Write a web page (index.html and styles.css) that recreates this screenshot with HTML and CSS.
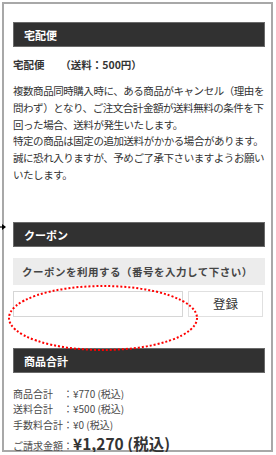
FILE: index.html
```html
<!DOCTYPE html>
<html lang="ja">
<head>
  <meta charset="UTF-8" />
  <meta name="viewport" content="width=device-width, initial-scale=1.0"/>
  <title>お届け方法・クーポン</title>
  <link rel="stylesheet" href="styles.css">
</head>
<body>

<svg class="pointer" width="6" height="8" viewBox="0 0 6 8">
  <path d="M0 4 H3" stroke="#000" stroke-width="1.2"/>
  <path d="M2 1 L6 4 L2 7 Z" fill="#000"/>
</svg>

<div class="frame">

  <h3 class="bar first">宅配便</h3>
  <p class="method">宅配便　　（送料：500円）</p>
  <p class="note">
    複数商品同時購入時に、ある商品がキャンセル（理由を問わず）となり、ご注文合計金額が送料無料の条件を下回った場合、送料が発生いたします。<br>
    特定の商品は固定の追加送料がかかる場合があります。誠に恐れ入りますが、予めご了承下さいますようお願いいたします。
  </p>

  <h3 class="bar coupon-bar">クーポン</h3>
  <div class="coupon-title">クーポンを利用する（番号を入力して下さい）</div>
  <form class="coupon-row">
    <input type="text" name="coupon" class="coupon-input" />
    <button type="button" class="coupon-btn">登録</button>
    <svg class="circle" width="194" height="70" viewBox="0 0 194 70">
      <ellipse cx="97" cy="34" rx="94" ry="32" fill="none" stroke="#f00" stroke-width="2" stroke-dasharray="2 2"/>
    </svg>
  </form>

  <h3 class="bar total-bar">商品合計</h3>
  <ul class="totals">
    <li><span class="lbl">商品合計</span>：¥770 (税込)</li>
    <li><span class="lbl">送料合計</span>：¥500 (税込)</li>
    <li><span class="lbl">手数料合計</span>：¥0 (税込)</li>
    <li class="grand"><span class="lbl">ご請求金額</span>：<b>¥1,270 (税込)</b></li>
  </ul>

</div>

</body>
</html>
```

FILE: styles.css
```css
body {
  margin: 0;
  font-family: "Noto Sans CJK JP", "Noto Sans", sans-serif;
  color: #333;
  background: #fff;
}

.pointer {
  position: absolute;
  left: 0;
  top: 223px;
}

.frame {
  margin: 2px 3px 0 2px;
  height: 450px;
  border: 2px solid #a8a8a8;
  padding: 18px 6px 0 9px;
  box-sizing: border-box;
}

.bar {
  margin: 0;
  height: 25px;
  line-height: 24px;
  padding-left: 10px;
  background: #313131;
  border: 1px solid #6a6a6a;
  box-sizing: border-box;
  color: #fff;
  font-size: 11px;
  font-weight: bold;
}

.method {
  margin: 10px 0 0;
  font-size: 10.5px;
  font-weight: bold;
  line-height: 16px;
}

.note {
  margin: 10px -2px 0 0;
  font-size: 10.5px;
  letter-spacing: -0.45px;
  line-height: 16.8px;
}

.coupon-bar {
  margin-top: 38px;
}

.coupon-title {
  margin-top: 11px;
  height: 27px;
  line-height: 27px;
  padding-left: 9px;
  background: #ececec;
  font-size: 10.5px;
  font-weight: bold;
  letter-spacing: 0.5px;
  color: #444;
}

.coupon-row {
  position: relative;
  display: flex;
  gap: 5px;
  margin-top: 6px;
  padding-right: 2px;
}

.coupon-input {
  width: 170px;
  height: 26px;
  margin: 0;
  border: 1px solid #d6d6d6;
  box-sizing: border-box;
}

.coupon-btn {
  flex: 1;
  height: 26px;
  border: 1px solid #e0e0e0;
  background: #fff;
  font-family: inherit;
  font-size: 12.5px;
  color: #333;
}

.circle {
  position: absolute;
  left: -7px;
  top: -7px;
  pointer-events: none;
}

.total-bar {
  margin-top: 31px;
}

.totals {
  list-style: none;
  margin: 13px 0 0;
  padding: 0;
  font-size: 10px;
  color: #4a4a4a;
}

.totals li {
  line-height: 15.5px;
}

.lbl {
  display: inline-block;
  width: 5em;
}

.grand {
  margin-top: 4px;
}

.grand b {
  font-size: 15.5px;
  color: #333;
}
```
